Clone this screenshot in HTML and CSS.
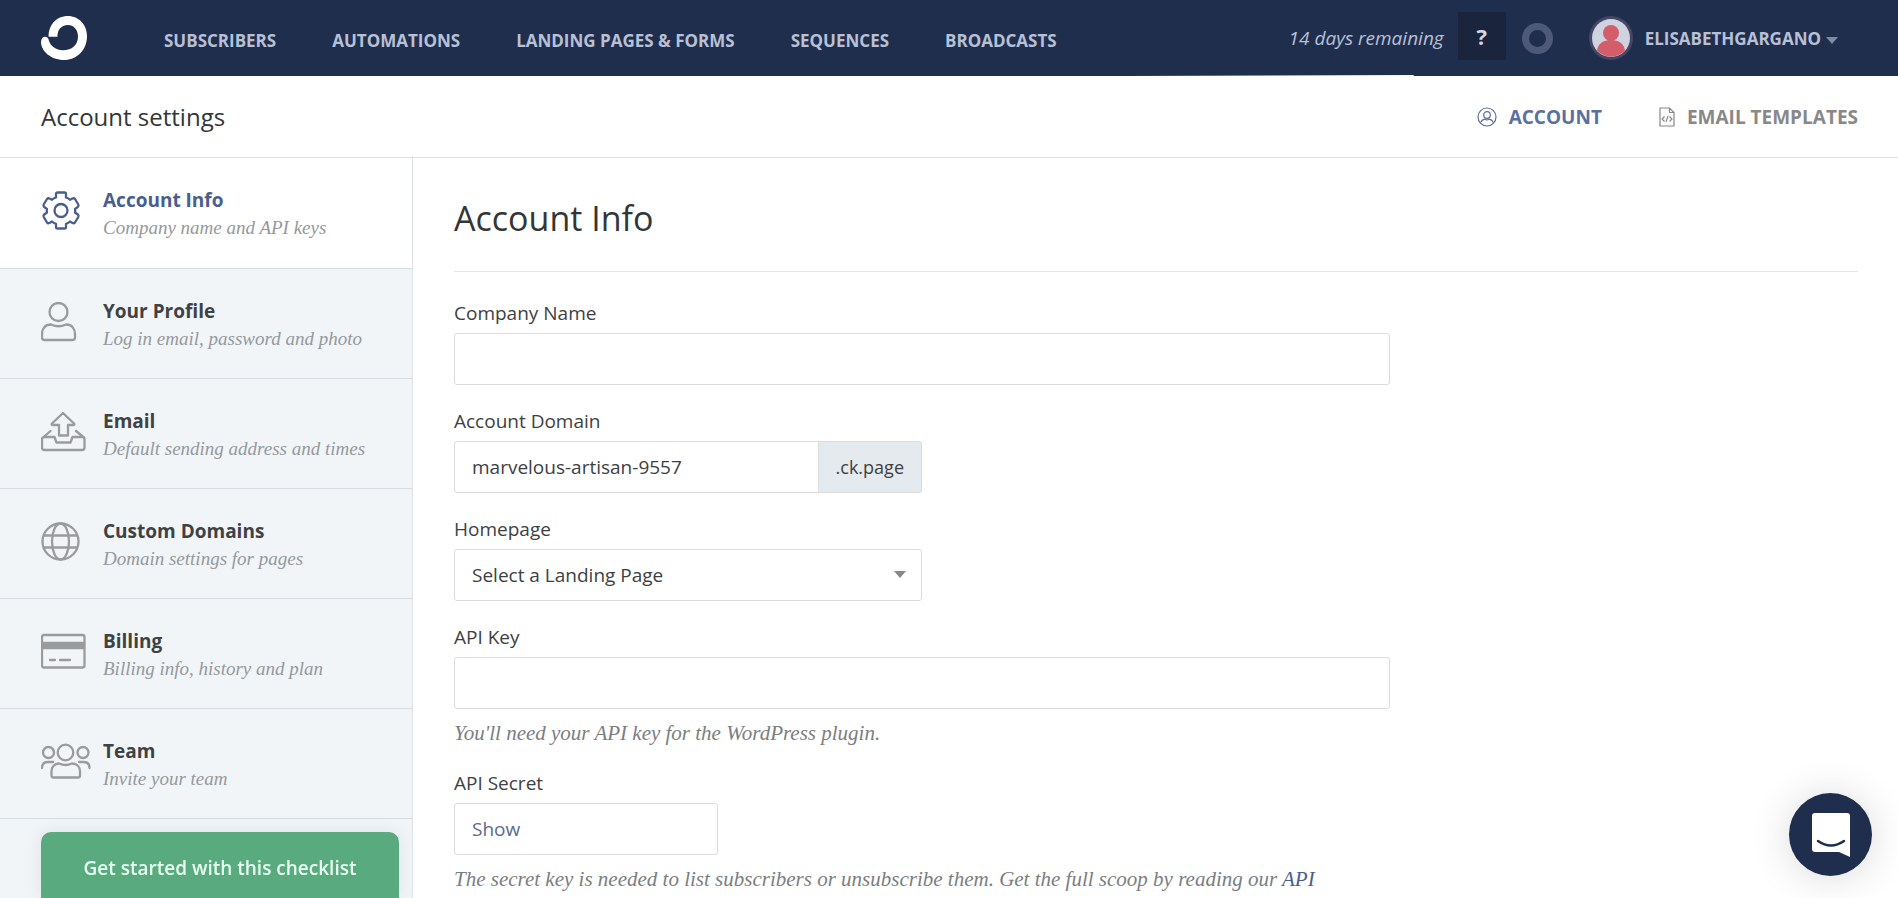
FILE: index.html
```html
<!DOCTYPE html>
<html lang="en">
  <head>
    <meta charset="UTF-8" />
    <meta name="viewport" content="width=device-width, initial-scale=1.0" />
    <title>Account settings</title>
    <link rel="stylesheet" href="styles.css">
  </head>
  <body>
    <!-- Top navigation -->
    <header class="topbar">
      <a class="logo" href="#" aria-label="Home">
        <svg width="46" height="44" viewBox="0 0 46 44">
          <path d="M7.600 20.700C7.600 9 15 0 27 0C38 0 46 9 46 20C46 34 36 44 23 44C10 44 0 35 0 26C0 22.500 2 20.700 4 20.700Q6.800 20.700 7.600 23.500C9 30 15 34.300 22 34.300C31 34.300 37 29 37 20.500C37 13.500 32.500 9 27 9C21 9 16.400 13 16.400 20.700Z" fill="#fff" />
        </svg>
      </a>
      <nav class="main-nav">
        <a href="#">SUBSCRIBERS</a>
        <a href="#">AUTOMATIONS</a>
        <a href="#">LANDING PAGES &amp; FORMS</a>
        <a href="#">SEQUENCES</a>
        <a href="#">BROADCASTS</a>
      </nav>
      <div class="user-area">
        <span class="trial">14 days remaining</span>
        <button class="help" type="button">?</button>
        <span class="ring"></span>
        <a class="user" href="#">
          <svg class="avatar" width="44" height="44" viewBox="0 0 44 44">
            <circle cx="22" cy="22" r="22" fill="#444665" />
            <circle cx="22" cy="22" r="19" fill="#cfd3df" />
            <circle cx="22" cy="17" r="8" fill="#d45d6b" />
            <path d="M8 34.500C9 28 14 24 22 24S35 28 36 34.500A19 19 0 0 1 8 34.500Z" fill="#d45d6b" />
          </svg>
          <span>ELISABETHGARGANO</span>
          <svg class="caret" width="12" height="7" viewBox="0 0 12 7"><path d="M0 0H12L6 7Z" fill="#8189a3" /></svg>
        </a>
      </div>
    </header>

    <!-- Page title and tabs -->
    <div class="subheader">
      <h1>Account settings</h1>
      <nav class="tabs">
        <a class="active" href="#">
          <svg width="20" height="20" viewBox="0 0 20 20" fill="none" stroke="currentColor" stroke-width="1.2">
            <circle cx="10" cy="10" r="9" />
            <circle cx="10" cy="8" r="3.300" />
            <path d="M4 15.500C4.500 13 6.500 12.500 8 12.200Q10 13.500 12 12.200C13.500 12.500 15.500 13 16 15.500" />
          </svg>
          ACCOUNT
        </a>
        <a href="#">
          <svg width="16" height="20" viewBox="0 0 16 20" fill="none" stroke="currentColor" stroke-width="1.2">
            <path d="M1 1H10.500L15 5.500V19H1ZM10.500 1V5.500H15" />
            <path d="M5.500 9.500L3 12L5.500 14.500M10.500 9.500L13 12L10.500 14.500M9 9L7 15" />
          </svg>
          EMAIL TEMPLATES
        </a>
      </nav>
    </div>

    <div class="layout">
      <!-- Settings menu -->
      <aside class="sidebar">
        <a class="item active" href="#">
          <svg width="50" height="46" viewBox="0 0 50 46">
            <path d="M16.500 1.500H23.500Q25 1.500 25 3V6.500Q27.500 7.200 29 8.800L31.500 7.500Q33 6.800 34 8L37.300 13.500Q38 15 36.800 16L34 18Q34.500 19.500 34 21.500L36.800 23.500Q38 24.500 37.300 26L34 31.500Q33 32.700 31.500 32L29 30.500Q27.500 32 25 32.800V36Q25 37.500 23.500 37.500H16.500Q15 37.500 15 36V32.800Q12.500 32 11 30.500L8.500 32Q7 32.700 6 31.500L2.700 26Q2 24.500 3.200 23.500L6 21.500Q5.500 19.500 6 18L3.200 16Q2 15 2.700 13.500L6 8Q7 6.800 8.500 7.500L11 8.800Q12.500 7.200 15 6.500V3Q15 1.500 16.500 1.500Z" />
            <circle cx="20" cy="19.500" r="6.500" />
          </svg>
          <span class="item-text"><strong>Account Info</strong><em>Company name and API keys</em></span>
        </a>
        <a class="item" href="#">
          <svg width="50" height="46" viewBox="0 0 50 46">
            <circle cx="17.500" cy="10" r="9" />
            <path d="M10 22.500Q17.500 26 25 22.500C31 22.500 34 27 34 32V35.500Q34 38 31.500 38H3.500Q1 38 1 35.500V32C1 27 4 22.500 10 22.500Z" />
          </svg>
          <span class="item-text"><strong>Your Profile</strong><em>Log in email, password and photo</em></span>
        </a>
        <a class="item" href="#">
          <svg width="50" height="46" viewBox="0 0 50 46">
            <path d="M22 1L33 11.500Q34 13 32 13H27V23.500H18V13H12Q10 13 11 11.500Z" />
            <path d="M9.500 19L2 25.500M35 19L43 25.500M4 25H13.500L15.500 30.500H29.500L31.500 25H41Q43.500 25 43.500 27.500V35.500Q43.500 38 41 38H3.500Q1 38 1 35.500V27.500Q1 25 4 25Z" />
          </svg>
          <span class="item-text"><strong>Email</strong><em>Default sending address and times</em></span>
        </a>
        <a class="item" href="#">
          <svg width="50" height="46" viewBox="0 0 50 46">
            <circle cx="19.500" cy="19.500" r="18" />
            <ellipse cx="19.500" cy="19.500" rx="8.500" ry="18" />
            <path d="M3 13.500H36M3 25.500H36" />
          </svg>
          <span class="item-text"><strong>Custom Domains</strong><em>Domain settings for pages</em></span>
        </a>
        <a class="item" href="#">
          <svg width="50" height="46" viewBox="0 0 50 46">
            <rect x="1" y="3" width="42.500" height="32.500" rx="2" />
            <path class="stripe" d="M1 13.500H43.500" />
            <path d="M9 28H14M19 28H29" />
          </svg>
          <span class="item-text"><strong>Billing</strong><em>Billing info, history and plan</em></span>
        </a>
        <a class="item" href="#">
          <svg width="50" height="46" viewBox="0 0 50 46">
            <circle cx="24.500" cy="10.500" r="7.800" />
            <circle cx="7.500" cy="10.500" r="5.500" />
            <circle cx="42" cy="10.500" r="5.500" />
            <path d="M18 21.500Q24.500 24.500 31 21.500C36 21.500 39 25 39 29.500V33.500Q39 35.500 37 35.500H12.500Q10.500 35.500 10.500 33.500V29.500C10.500 25 13.500 21.500 18 21.500Z" />
            <path d="M1 26C1 22 3.500 20 7 20H12M48.500 26C48.500 22 46 20 42.500 20H38" />
          </svg>
          <span class="item-text"><strong>Team</strong><em>Invite your team</em></span>
        </a>
      </aside>

      <!-- Account form -->
      <main class="content">
        <h2>Account Info</h2>
        <form>
          <div class="field">
            <label for="company">Company Name</label>
            <input class="box" id="company" type="text">
          </div>
          <div class="field">
            <label for="domain">Account Domain</label>
            <div class="input-group half">
              <input class="box" id="domain" type="text" value="marvelous-artisan-9557">
              <span class="addon">.ck.page</span>
            </div>
          </div>
          <div class="field">
            <label for="homepage">Homepage</label>
            <div class="select-wrap half">
              <select class="box" id="homepage">
                <option>Select a Landing Page</option>
              </select>
              <svg class="arrow" width="12" height="7" viewBox="0 0 12 7"><path d="M0 0H12L6 7Z" fill="#888" /></svg>
            </div>
          </div>
          <div class="field">
            <label for="api-key">API Key</label>
            <input class="box" id="api-key" type="text" readonly>
            <p class="hint">You'll need your API key for the WordPress plugin.</p>
          </div>
          <div class="field">
            <label for="api-secret">API Secret</label>
            <button class="box show" id="api-secret" type="button">Show</button>
            <p class="hint">The secret key is needed to list subscribers or unsubscribe them. Get the full scoop by reading our <a href="#">API</a></p>
          </div>
        </form>
      </main>
    </div>

    <!-- Floating buttons -->
    <button class="checklist" type="button">Get started with this checklist</button>
    <button class="chat" type="button" aria-label="Chat">
      <svg width="40" height="46" viewBox="0 0 40 46">
        <path d="M4 1H36Q39 1 39 4V45L28 40H4Q1 40 1 37V4Q1 1 4 1Z" fill="#fff" />
        <path d="M7 29Q20 38 33 29" fill="none" stroke="#202e4e" stroke-width="2.500" stroke-linecap="round" />
      </svg>
    </button>
  </body>
</html>
```
FILE: styles.css
```css
* {
  box-sizing: border-box;
}

body {
  margin: 0;
  height: 100vh;
  display: flex;
  flex-direction: column;
  overflow: hidden;
  font-family: "Open Sans", sans-serif;
  font-size: 19px;
  color: #3d4144;
  background: #fff;
}

a {
  text-decoration: none;
}

button,
input,
select {
  font: inherit;
  color: inherit;
}

button {
  cursor: pointer;
}

/* Top navigation */
.topbar {
  flex: none;
  display: flex;
  align-items: center;
  height: 76px;
  padding: 0 60px 0 41px;
  background: linear-gradient(to right, transparent, #fff) 70% 100% / 15% 1px no-repeat #202e4e;
}

.logo {
  display: flex;
}

.main-nav {
  display: flex;
  gap: 56px;
  margin-left: 77px;
  padding-top: 5px;
}

.main-nav a,
.user {
  color: #b8c0d6;
  font-size: 17px;
  font-weight: 700;
}

.user-area {
  display: flex;
  align-items: center;
  margin-left: auto;
}

.trial {
  color: #b8c0d6;
  font-style: italic;
}

.help {
  width: 48px;
  height: 48px;
  margin: 0 16px 4px 14px;
  padding: 0;
  border: 0;
  color: #d3d7e2;
  background: #1a253d;
  font-size: 22px;
  font-weight: 700;
}

.ring {
  width: 31px;
  height: 31px;
  border: 7px solid #4d5977;
  border-radius: 50%;
}

.user {
  display: flex;
  align-items: center;
  margin-left: 36px;
}

.avatar {
  margin-right: 12px;
}

.caret {
  margin: 4px 0 0 5px;
}

/* Page title and tabs */
.subheader {
  flex: none;
  display: flex;
  align-items: center;
  justify-content: space-between;
  height: 82px;
  padding: 0 40px 0 41px;
  border-bottom: 1px solid #dcdfe2;
}

.subheader h1 {
  margin: 0;
  color: #323638;
  font-size: 24px;
  font-weight: 400;
}

.tabs {
  display: flex;
  gap: 57px;
}

.tabs a {
  display: flex;
  align-items: center;
  gap: 12px;
  color: #888;
  font-weight: 700;
}

.tabs .active {
  color: #5a70a0;
}

.layout {
  flex: 1;
  display: flex;
  min-height: 0;
}

/* Settings menu */
.sidebar {
  flex: none;
  width: 413px;
  overflow: hidden;
  background: #f1f5f8;
  border-right: 1px solid #dce2e6;
}

.item {
  display: flex;
  align-items: center;
  gap: 12px;
  height: 110px;
  padding: 2px 0 0 41px;
  border-bottom: 1px solid #d6dde2;
}

.item svg {
  fill: none;
  stroke: #999b9d;
  stroke-width: 2.3;
  stroke-linecap: round;
  stroke-linejoin: round;
}

.item .stripe {
  stroke-width: 7.5;
  stroke-linecap: butt;
}

.item-text {
  display: flex;
  flex-direction: column;
}

.item strong {
  color: #3f4244;
  font-weight: 700;
  line-height: 28px;
}

.item em {
  color: #95999b;
  font-family: Georgia, "Liberation Serif", serif;
  font-size: 19px;
  line-height: 28px;
}

.item.active {
  height: 111px;
  background: #fff;
}

.item.active svg {
  stroke: #4a5e8e;
}

.item.active strong {
  color: #4a5e8e;
}

/* Account form */
.content {
  flex: 1;
  padding: 0 40px 0 41px;
}

.content h2 {
  margin: 0 0 27px;
  padding: 36px 0 28px;
  border-bottom: 1px solid #e4e6e8;
  color: #323638;
  font-size: 34px;
  font-weight: 400;
  line-height: 49px;
}

form {
  width: 66.667%;
}

.field {
  margin-bottom: 22px;
}

.field label {
  display: block;
  margin-bottom: 6px;
  line-height: 28px;
}

.box {
  display: block;
  width: 100%;
  height: 52px;
  padding: 0 17px;
  border: 1px solid #dadcde;
  border-radius: 3px;
  background: #fff;
}

.half {
  width: 50%;
}

.input-group {
  display: flex;
}

.input-group .box {
  flex: 1;
  min-width: 0;
  border-radius: 3px 0 0 3px;
}

.addon {
  display: flex;
  align-items: center;
  padding: 0 17px;
  border: 1px solid #dadcde;
  border-left: 0;
  border-radius: 0 3px 3px 0;
  background: #e5eaee;
  font-size: 18px;
}

.select-wrap {
  position: relative;
}

.select-wrap .box {
  appearance: none;
}

.arrow {
  position: absolute;
  top: 22px;
  right: 16px;
  pointer-events: none;
}

.hint {
  margin: 10px 0 0;
  color: #7b7e80;
  font-family: Georgia, "Liberation Serif", serif;
  font-size: 21px;
  font-style: italic;
  line-height: 28px;
}

.hint a {
  color: #4a5e8e;
}

.show {
  width: 264px;
  color: #5a6b8e;
  text-align: left;
}

/* Floating buttons */
.checklist {
  position: fixed;
  left: 41px;
  bottom: 0;
  width: 358px;
  height: 66px;
  padding: 6px 0 0;
  border: 0;
  border-radius: 10px 10px 0 0;
  color: #e9fff2;
  background: #59ab7f;
  font-weight: 600;
  box-shadow: 0 0 18px rgba(0, 0, 0, 0.08);
}

.chat {
  position: fixed;
  right: 26px;
  bottom: 22px;
  display: flex;
  align-items: center;
  justify-content: center;
  width: 83px;
  height: 83px;
  padding: 0;
  border: 0;
  border-radius: 50%;
  background: #202e4e;
  box-shadow: 0 2px 40px rgba(0, 0, 0, 0.15);
}
```
